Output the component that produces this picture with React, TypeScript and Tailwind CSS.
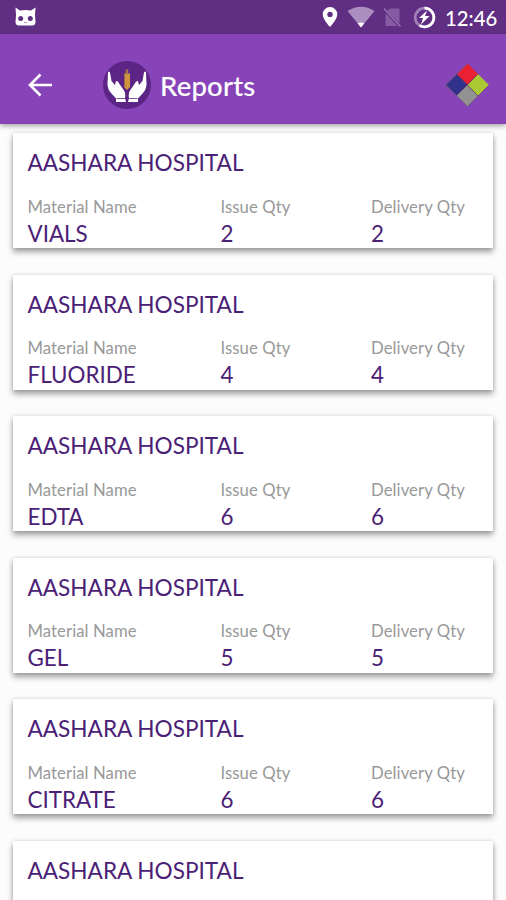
type Report = { id: number; material?: string; qty?: number };

const records: Report[] = [
  { id: 1, material: 'VIALS', qty: 2 },
  { id: 2, material: 'FLUORIDE', qty: 4 },
  { id: 3, material: 'EDTA', qty: 6 },
  { id: 4, material: 'GEL', qty: 5 },
  { id: 5, material: 'CITRATE', qty: 6 },
  { id: 6 },
];

function StatusBar() {
  return (
    <div className="flex h-[34px] shrink-0 items-center bg-[#602f84] pr-[11px] pl-[14px] text-white">
      <svg width="23" height="20" viewBox="0 0 23 20" fill="#fff">
        <path d="M1.500 .5L6 3.500Q11.500 2.500 17 3.500L21.500 .5L21 8L21.500 15.500Q21 18.500 18.500 18.500H4.500Q2 18.500 1.500 15.500L2 8Z" />
        <circle cx="6.700" cy="11.500" r="2.500" fill="#602f84" />
        <circle cx="16.300" cy="11.500" r="2.500" fill="#602f84" />
        <path d="M10 15.500h3" stroke="#b79bc9" />
      </svg>
      <svg className="ml-auto" width="16" height="22" viewBox="0 0 16 22">
        <path fillRule="evenodd" fill="#fff" d="M8 1a7.300 7.300 0 0 0-7.300 7.300C.7 13.500 8 21 8 21s7.300-7.500 7.300-12.700A7.300 7.300 0 0 0 8 1Zm0 4.700a2.700 2.700 0 1 1 0 5.400 2.700 2.700 0 0 1 0-5.400Z" />
      </svg>
      <svg className="ml-[9px]" width="28" height="22" viewBox="0 0 28 22">
        <path d="M0.500 5Q14-3.500 27.500 5L14 21.500Z" fill="#ab8dc0" />
        <path d="M10.700 17.300Q14 15.500 17.300 17.300L14 21.500Z" fill="#fff" />
      </svg>
      <svg className="ml-[8px]" width="19" height="21" viewBox="0 0 19 21">
        <path d="M7 1.500h9.500v15L4.500 4Z M2.500 6L14.500 19H2.500Z" fill="#865ba2" />
        <path d="M1 1.500L17.500 19.500" stroke="#9770b0" strokeWidth="1.600" />
      </svg>
      <svg className="ml-[11px]" width="23" height="23" viewBox="0 0 23 23" fill="none">
        <circle cx="11.500" cy="11.500" r="9.300" stroke="#a17fb8" strokeWidth="2.800" />
        <path d="M11.500 2.200a9.300 9.300 0 1 1-5 17.100" stroke="#fff" strokeWidth="2.800" />
        <path d="M14 4.500L6 12h4l-2 6.500 8.500-8.500h-4.500Z" fill="#fff" />
      </svg>
      <span className="ml-[9px] w-[50px] pt-px text-[20.300px] leading-[26px] font-medium whitespace-nowrap">12:46</span>
    </div>
  );
}

function HandsLogo() {
  return (
    <svg className="ml-[50px]" width="50" height="50" viewBox="0 0 50 50">
      <circle cx="25" cy="25" r="24" fill="#5b2485" />
      <g fill="#fff">
        <path d="M6 12.500Q6.500 10.500 8 12.500L9.500 21L13 25L14 21Q16 20.500 17.500 24L22 30.500Q23.800 33 23 38L24 42H14V38.500L9 33Q5.500 29 5.500 24Z" />
        <path d="M44 12.500Q43.500 10.500 42 12.500L40.500 21L37 25L36 21Q34 20.500 32.500 24L28 30.500Q26.200 33 27 38L26 42H36V38.500L41 33Q44.500 29 44.500 24Z" />
      </g>
      <path d="M14.500 38.500H23M27 38.500h8.500" stroke="#7b5395" strokeWidth="1" />
      <path d="M22 13.500h6v13.500l-3 3-3-3Z" fill="#ce943f" />
      <path d="M25 9.500v4" stroke="#aa7554" strokeWidth="2.500" />
      <path d="M22.500 14v13" stroke="#9a6650" strokeWidth="1" />
    </svg>
  );
}

function AppBar() {
  return (
    <header className="relative flex h-[90px] shrink-0 items-center bg-[#8743b8] pt-3 pr-[16px] pl-[27px] shadow-[0_2px_5px_rgba(0,0,0,0.35)]">
      <svg width="25" height="24" viewBox="0 0 25 24" fill="none" stroke="#fff" strokeWidth="2.600">
        <path d="M13.500 1.500L3 12L13.500 22.500M3 12H25" />
      </svg>
      <HandsLogo />
      <h1 className="ml-[8px] pt-[2px] text-[27.500px] leading-8 font-medium tracking-[0.200px] text-white [-webkit-text-stroke:0.100px_#fff]">Reports</h1>
      <svg className="ml-auto" width="46" height="46" viewBox="0 0 46 46">
        <path d="M23.500 1.500L34 12L23.500 23L12.500 12Z" fill="#eb2032" />
        <path d="M34 12L45 23L34 34L23.500 23Z" fill="#abc932" />
        <path d="M12.500 12L23.500 23L12.500 33.500L1.500 23Z" fill="#30328b" />
        <path d="M23.500 23L34 34L23.500 44.500L12.500 33.500Z" fill="#929194" />
        <path d="M1.500 23L23.500 1.500M1.500 23L23.500 44.500L45 23" fill="none" stroke="#765581" strokeWidth="1" />
        <path d="M12.500 12L34 34M34 12L12.500 33.500" stroke="#5a2c62" strokeWidth=".7" />
      </svg>
    </header>
  );
}

function Field({ label, value }: { label: string; value: string | number }) {
  return (
    <div>
      <div className="text-[16.700px] leading-[22px] tracking-[0.080px] whitespace-nowrap text-[#999999]">{label}</div>
      <div className="mt-[2px] text-[22.400px] leading-[28px] whitespace-nowrap text-[#4b2176]">{value}</div>
    </div>
  );
}

function ReportCard({ material, qty }: Report) {
  return (
    <article className="h-[115px] shrink-0 bg-white pt-[16px] pl-[14.500px] shadow-[0_4px_6px_rgba(0,0,0,0.36),0_0_4px_rgba(0,0,0,0.14)]">
      <h2 className="text-[22.600px] leading-[28px] whitespace-nowrap text-[#4b2176]">AASHARA HOSPITAL</h2>
      {material !== undefined && qty !== undefined && (
        <div className="mt-[18.500px] grid grid-cols-[193px_150.500px_110px]">
          <Field label="Material Name" value={material} />
          <Field label="Issue Qty" value={qty} />
          <Field label="Delivery Qty" value={qty} />
        </div>
      )}
    </article>
  );
}

export default function App() {
  return (
    <div className="flex h-[900px] w-[506px] flex-col overflow-hidden bg-[#fcfcfc] font-['Lato','Liberation_Sans',sans-serif]">
      <StatusBar />
      <AppBar />
      <main className="flex min-h-0 flex-1 flex-col gap-[26.600px] overflow-hidden px-[13px] pt-[9px]">
        {records.map((r) => (
          <ReportCard key={r.id} {...r} />
        ))}
      </main>
    </div>
  );
}
